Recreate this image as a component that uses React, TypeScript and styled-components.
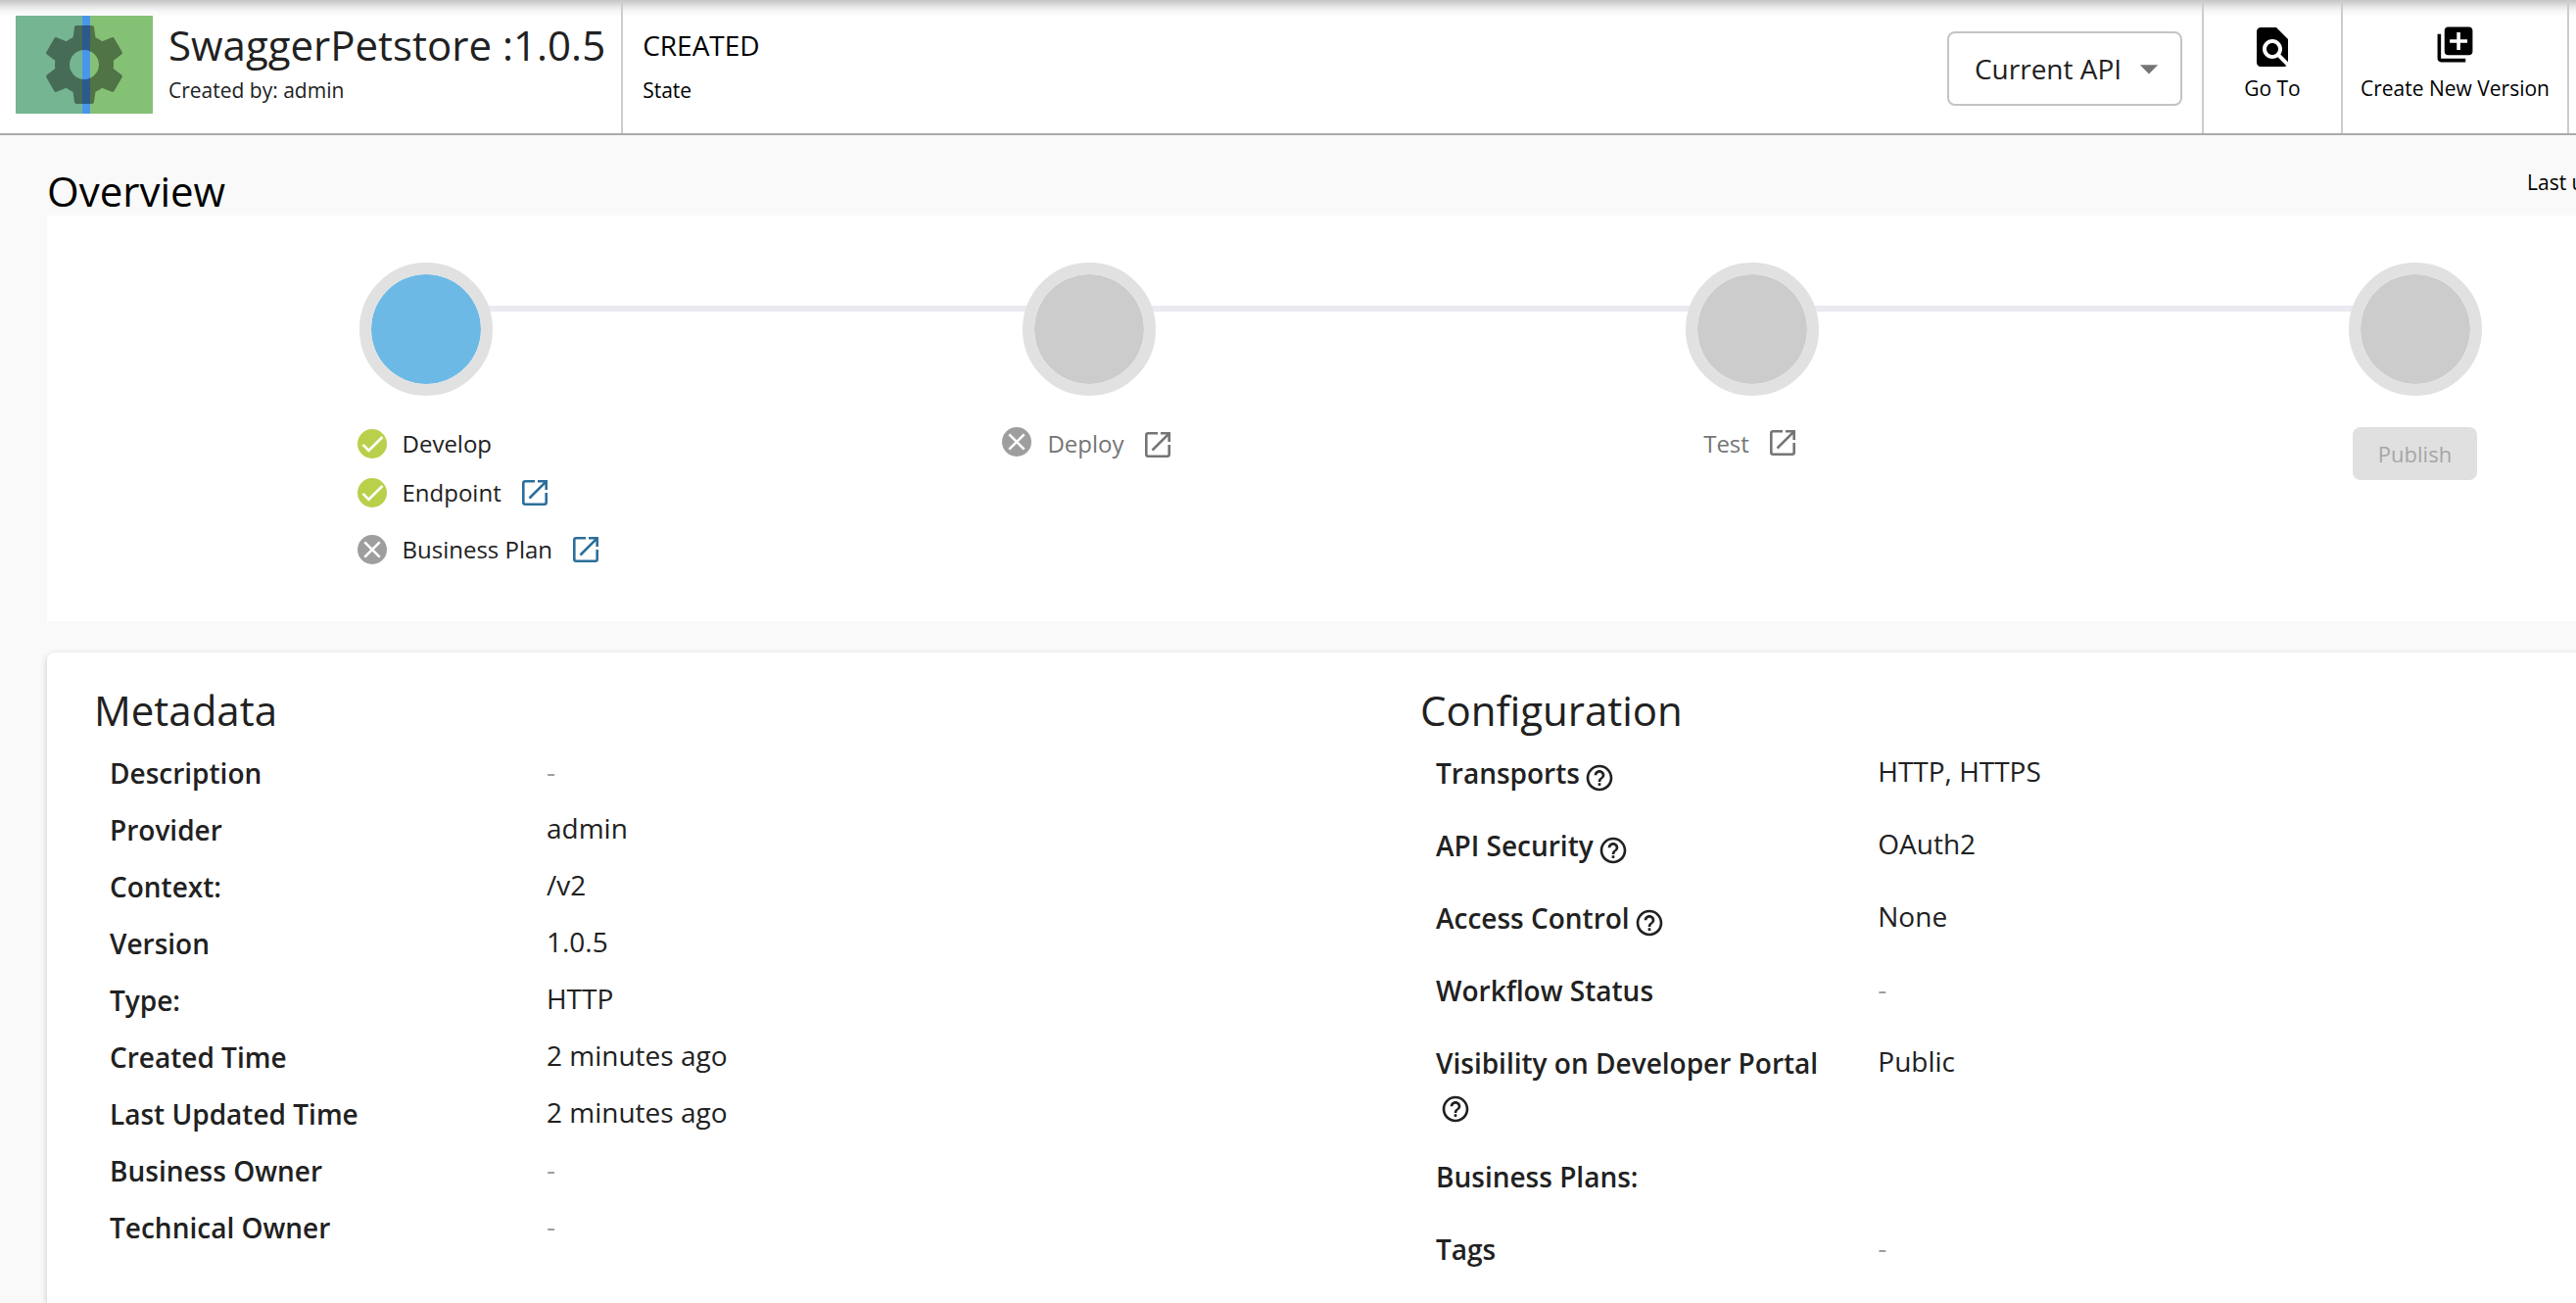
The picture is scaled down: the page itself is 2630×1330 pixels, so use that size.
import React from "react";
import styled, { createGlobalStyle } from "styled-components";
import { MdFindInPage, MdLibraryAdd, MdSettings, MdHelpOutline, MdArrowDropDown } from "react-icons/md";

const GlobalStyle = createGlobalStyle`
  *, *::before, *::after { box-sizing: border-box; }
  body {
    margin: 0;
    background: #f9f9f9;
    color: #212121;
    font-family: "Open Sans", "Noto Sans", sans-serif;
    font-size: 28px;
    line-height: 42px;
  }
  h1, h2, p, ul { margin: 0; padding: 0; font-weight: 400; }
  svg { display: block; flex: none; }
`;

const Page = styled.div`
  min-height: 100vh;
  display: flex;
  flex-direction: column;
  overflow: hidden;
`;

const Header = styled.header`
  display: flex;
  height: 138px;
  border-bottom: 2px solid #aaaaaa;
  background: #ffffff linear-gradient(#c4c4c4, #e2e2e2 6px, #f8f8f8 12px, #ffffff 18px) no-repeat;
`;

const Identity = styled.div`
  display: flex;
  gap: 16px;
  padding: 16px 16px 0;
  border-right: 2px solid #cccccc;
  white-space: nowrap;
`;

const Thumbnail = styled.div`
  display: flex;
  align-items: center;
  justify-content: center;
  width: 140px;
  height: 100px;
  background: linear-gradient(90deg, #76b592 68px, #4a96ea 68px 76px, #85c175 76px);
  color: rgba(0, 0, 0, 0.4);
`;

const Title = styled.h1`
  font-size: 42px;
  line-height: 60px;
`;

const State = styled.div`
  padding: 16px 20px 0;
  color: #000000;
`;

const StateName = styled.p`
  line-height: 60px;
`;

const Caption = styled.p`
  font-size: 21px;
  line-height: 32px;
  white-space: nowrap;
`;

const Actions = styled.div`
  display: flex;
  margin-left: auto;
  padding-right: 7px;
`;

const SelectWrap = styled.div`
  display: grid;
  align-self: flex-start;
  align-items: center;
  margin: 32px 20px 0 0;
  width: 240px;
  > * { grid-area: 1 / 1; }
  > svg { justify-self: end; margin-right: 12px; color: #757575; pointer-events: none; }
`;

const Select = styled.select`
  appearance: none;
  width: 100%;
  height: 76px;
  padding: 0 26px;
  border: 2px solid #c4c4c4;
  border-radius: 8px;
  background: transparent;
  color: #212121;
  font: inherit;
`;

const Action = styled.button`
  display: flex;
  flex-direction: column;
  align-items: center;
  justify-content: space-between;
  height: 136px;
  padding: 24px 20px 30px;
  min-width: 142px;
  border: 0;
  border-left: 2px solid #cccccc;
  background: transparent;
  color: #000000;
  font: inherit;
  &:last-child { padding-inline: 18px; border-right: 2px solid #cccccc; }
`;

const Content = styled.main`
  flex: 1;
  display: flex;
  flex-direction: column;
  width: calc(100% + 222px);
  padding: 28px 0 0 48px;
`;

const ContentHead = styled.div`
  display: flex;
  justify-content: space-between;
  align-items: flex-start;
  height: 54px;
  color: #000000;
`;

const Updated = styled(Caption)`
  width: 272px;
  padding-top: 4px;
`;

const Lifecycle = styled.section`
  display: grid;
  grid-template-columns: repeat(4, 1fr);
  height: 414px;
  padding: 48px;
  background: #ffffff;
`;

const Step = styled.div`
  display: flex;
  flex-direction: column;
  align-items: center;
  gap: 32px;
`;

const Track = styled.div`
  display: flex;
  align-self: stretch;
`;

const Line = styled.div<{ $hidden?: boolean }>`
  flex: 1;
  height: 6px;
  margin-top: 44px;
  background: ${(p) => (p.$hidden ? "transparent" : "#eaeaf0")};
`;

const Dot = styled.div<{ $active?: boolean }>`
  position: relative;
  width: 136px;
  height: 136px;
  margin: 0 -8px;
  border: 12px solid #e1e1e1;
  border-radius: 50%;
  background: ${(p) => (p.$active ? "#6cb9e6" : "#cccccc")};
  background-clip: padding-box;
`;

const Checks = styled.ul`
  display: flex;
  flex-direction: column;
  gap: 16px;
  width: 140px;
  list-style: none;
`;

const Check = styled.li<{ $align?: string; $muted?: boolean }>`
  display: flex;
  align-items: ${(p) => p.$align ?? "center"};
  gap: 16px;
  height: 34px;
  color: ${(p) => (p.$muted ? "#757575" : "#212121")};
  font-size: 24px;
  line-height: 34px;
  white-space: nowrap;
  &:nth-child(3) { margin-top: 8px; }
`;

const OpenLink = styled.a<{ $muted?: boolean }>`
  display: flex;
  color: ${(p) => (p.$muted ? "#757575" : "#2a6f9a")};
`;

const Publish = styled.button`
  height: 54px;
  padding: 0 26px;
  border: 0;
  border-radius: 8px;
  background: #e0e0e0;
  color: #a6a6a6;
  font: inherit;
  font-size: 22px;
`;

const Card = styled.section`
  flex: 1;
  display: grid;
  grid-template-columns: 1fr 1fr;
  margin-top: 32px;
  padding: 30px 48px 0;
  border-radius: 8px 8px 0 0;
  background: #ffffff;
  box-shadow: 0 2px 6px rgba(0, 0, 0, 0.2);
`;

const Heading = styled.h2`
  font-size: 42px;
  line-height: 58px;
`;

const Table = styled.table<{ $roomy?: boolean }>`
  width: ${(p) => (p.$roomy ? "100%" : "calc(100% - 16px)")};
  margin-top: 6px;
  border-collapse: collapse;
  table-layout: fixed;
  th, td {
    padding: ${(p) => (p.$roomy ? "8px 16px 24px" : "8px 16px")};
    text-align: left;
    vertical-align: top;
  }
  th { width: 33.33%; font-weight: 600; }
  td { line-height: 38px; }
`;

const Empty = styled.span`
  color: #9e9e9e;
`;

const Help = styled(MdHelpOutline)`
  display: inline-block;
  margin-left: 4px;
  vertical-align: -10px;
`;

function Badge({ ok }: { ok?: boolean }) {
  return (
    <svg width="30" height="30" viewBox="0 0 30 30" aria-hidden="true">
      <circle cx="15" cy="15" r="15" fill={ok ? "#b8d04a" : "#9e9e9e"} />
      <path
        d={ok ? "M5.5 15.8 11.5 21.8 25.5 8" : "M7.3 7.3 22.7 22.7M22.7 7.3 7.3 22.7"}
        fill="none"
        stroke="#ffffff"
        strokeWidth="2.6"
      />
    </svg>
  );
}

function Open({ name, muted }: { name: string; muted?: boolean }) {
  return (
    <OpenLink href="#" $muted={muted} aria-label={`Open ${name}`}>
      <svg width="36" height="36" viewBox="0 0 36 36" fill="none" stroke="currentColor" strokeWidth="2.6">
        <path d="M18 6.3H8.3a2 2 0 0 0-2 2V27.7a2 2 0 0 0 2 2H27.7a2 2 0 0 0 2-2V18" />
        <path d="M21 6.3H29.7V15M29.2 6.8 12.5 23.5" />
      </svg>
    </OpenLink>
  );
}

type Row = { label: string; value?: string; help?: boolean };

const metadata: Row[] = [
  { label: "Description", value: "-" },
  { label: "Provider", value: "admin" },
  { label: "Context:", value: "/v2" },
  { label: "Version", value: "1.0.5" },
  { label: "Type:", value: "HTTP" },
  { label: "Created Time", value: "2 minutes ago" },
  { label: "Last Updated Time", value: "2 minutes ago" },
  { label: "Business Owner", value: "-" },
  { label: "Technical Owner", value: "-" },
];

const configuration: Row[] = [
  { label: "Transports", value: "HTTP, HTTPS", help: true },
  { label: "API Security", value: "OAuth2", help: true },
  { label: "Access Control", value: "None", help: true },
  { label: "Workflow Status", value: "-" },
  { label: "Visibility on Developer Portal", value: "Public", help: true },
  { label: "Business Plans:" },
  { label: "Tags", value: "-" },
];

function Details({ title, rows, roomy }: { title: string; rows: Row[]; roomy?: boolean }) {
  return (
    <div>
      <Heading>{title}</Heading>
      <Table $roomy={roomy} aria-label={title}>
        <tbody>
          {rows.map((row) => (
            <tr key={row.label}>
              <th scope="row">
                {row.label}
                {row.help && <><wbr /><Help size={32} aria-hidden="true" /></>}
              </th>
              <td>{row.value === "-" ? <Empty>-</Empty> : row.value}</td>
            </tr>
          ))}
        </tbody>
      </Table>
    </div>
  );
}

export default function App() {
  return (
    <Page>
      <GlobalStyle />
      <Header>
        <Identity>
          <Thumbnail><MdSettings size={100} /></Thumbnail>
          <div>
            <Title>SwaggerPetstore :1.0.5</Title>
            <Caption>Created by: admin</Caption>
          </div>
        </Identity>
        <State>
          <StateName>CREATED</StateName>
          <Caption>State</Caption>
        </State>
        <Actions>
          <SelectWrap>
            <Select aria-label="API version">
              <option>Current API</option>
            </Select>
            <MdArrowDropDown size={44} />
          </SelectWrap>
          <Action type="button">
            <MdFindInPage size={48} />
            <Caption as="span">Go To</Caption>
          </Action>
          <Action type="button">
            <MdLibraryAdd size={43} />
            <Caption as="span">Create New Version</Caption>
          </Action>
        </Actions>
      </Header>
      <Content>
        <ContentHead>
          <Heading>Overview</Heading>
          <Updated>Last updated: 2 minutes ago</Updated>
        </ContentHead>
        <Lifecycle>
          <Step>
            <Track><Line $hidden /><Dot $active /><Line /></Track>
            <Checks>
              <Check><Badge ok />Develop</Check>
              <Check><Badge ok />Endpoint<Open name="Endpoint" /></Check>
              <Check><Badge />Business Plan<Open name="Business Plan" /></Check>
            </Checks>
          </Step>
          <Step>
            <Track><Line /><Dot /><Line /></Track>
            <Check as="div" $muted $align="flex-start"><Badge />Deploy<Open name="Deploy" muted /></Check>
          </Step>
          <Step>
            <Track><Line /><Dot /><Line /></Track>
            <Check as="div" $muted $align="flex-end">Test<Open name="Test" muted /></Check>
          </Step>
          <Step>
            <Track><Line /><Dot /><Line $hidden /></Track>
            <Publish type="button" disabled>Publish</Publish>
          </Step>
        </Lifecycle>
        <Card>
          <Details title="Metadata" rows={metadata} />
          <Details title="Configuration" rows={configuration} roomy />
        </Card>
      </Content>
    </Page>
  );
}
